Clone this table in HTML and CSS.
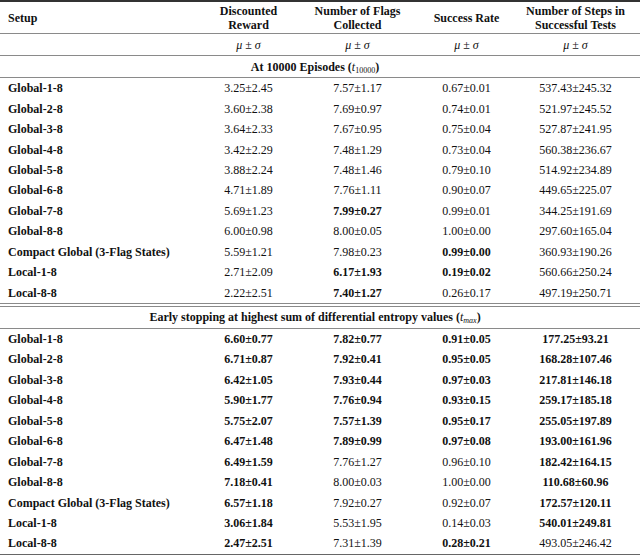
FILE: index.html
```html
<!DOCTYPE html>
<html>
<head>
<meta charset="utf-8">
<link rel="stylesheet" href="styles.css">
</head>
<body>
<table class="results">
  <colgroup>
    <col class="c-setup"><col class="c-val"><col class="c-val"><col class="c-val"><col class="c-last">
  </colgroup>
  <thead>
    <tr class="head">
      <th class="setup">Setup</th>
      <th>Discounted<br>Reward</th>
      <th>Number of Flags<br>Collected</th>
      <th>Success Rate</th>
      <th class="last">Number of Steps in<br>Successful Tests</th>
    </tr>
    <tr class="units">
      <td></td>
      <td><i>μ</i><span class="pm">±</span><i>σ</i></td>
      <td><i>μ</i><span class="pm">±</span><i>σ</i></td>
      <td><i>μ</i><span class="pm">±</span><i>σ</i></td>
      <td class="last"><i>μ</i><span class="pm">±</span><i>σ</i></td>
    </tr>
  </thead>
  <tbody>
    <tr class="section"><td colspan="5">At 10000 Episodes (<i>t</i><sub>10000</sub>)</td></tr>
    <tr><th class="setup">Global-1-8</th><td>3.25±2.45</td><td>7.57±1.17</td><td>0.67±0.01</td><td class="last">537.43±245.32</td></tr>
    <tr><th class="setup">Global-2-8</th><td>3.60±2.38</td><td>7.69±0.97</td><td>0.74±0.01</td><td class="last">521.97±245.52</td></tr>
    <tr><th class="setup">Global-3-8</th><td>3.64±2.33</td><td>7.67±0.95</td><td>0.75±0.04</td><td class="last">527.87±241.95</td></tr>
    <tr><th class="setup">Global-4-8</th><td>3.42±2.29</td><td>7.48±1.29</td><td>0.73±0.04</td><td class="last">560.38±236.67</td></tr>
    <tr><th class="setup">Global-5-8</th><td>3.88±2.24</td><td>7.48±1.46</td><td>0.79±0.10</td><td class="last">514.92±234.89</td></tr>
    <tr><th class="setup">Global-6-8</th><td>4.71±1.89</td><td>7.76±1.11</td><td>0.90±0.07</td><td class="last">449.65±225.07</td></tr>
    <tr><th class="setup">Global-7-8</th><td>5.69±1.23</td><td class="b">7.99±0.27</td><td>0.99±0.01</td><td class="last">344.25±191.69</td></tr>
    <tr><th class="setup">Global-8-8</th><td>6.00±0.98</td><td>8.00±0.05</td><td>1.00±0.00</td><td class="last">297.60±165.04</td></tr>
    <tr><th class="setup">Compact Global (3-Flag States)</th><td>5.59±1.21</td><td>7.98±0.23</td><td class="b">0.99±0.00</td><td class="last">360.93±190.26</td></tr>
    <tr><th class="setup">Local-1-8</th><td>2.71±2.09</td><td class="b">6.17±1.93</td><td class="b">0.19±0.02</td><td class="last">560.66±250.24</td></tr>
    <tr class="end"><th class="setup">Local-8-8</th><td>2.22±2.51</td><td class="b">7.40±1.27</td><td>0.26±0.17</td><td class="last">497.19±250.71</td></tr>
  </tbody>
  <tbody>
    <tr class="section"><td colspan="5">Early stopping at highest sum of differential entropy values (<i>t</i><sub class="it">max</sub>)</td></tr>
    <tr><th class="setup">Global-1-8</th><td class="b">6.60±0.77</td><td class="b">7.82±0.77</td><td class="b">0.91±0.05</td><td class="last b">177.25±93.21</td></tr>
    <tr><th class="setup">Global-2-8</th><td class="b">6.71±0.87</td><td class="b">7.92±0.41</td><td class="b">0.95±0.05</td><td class="last b">168.28±107.46</td></tr>
    <tr><th class="setup">Global-3-8</th><td class="b">6.42±1.05</td><td class="b">7.93±0.44</td><td class="b">0.97±0.03</td><td class="last b">217.81±146.18</td></tr>
    <tr><th class="setup">Global-4-8</th><td class="b">5.90±1.77</td><td class="b">7.76±0.94</td><td class="b">0.93±0.15</td><td class="last b">259.17±185.18</td></tr>
    <tr><th class="setup">Global-5-8</th><td class="b">5.75±2.07</td><td class="b">7.57±1.39</td><td class="b">0.95±0.17</td><td class="last b">255.05±197.89</td></tr>
    <tr><th class="setup">Global-6-8</th><td class="b">6.47±1.48</td><td class="b">7.89±0.99</td><td class="b">0.97±0.08</td><td class="last b">193.00±161.96</td></tr>
    <tr><th class="setup">Global-7-8</th><td class="b">6.49±1.59</td><td>7.76±1.27</td><td>0.96±0.10</td><td class="last b">182.42±164.15</td></tr>
    <tr><th class="setup">Global-8-8</th><td class="b">7.18±0.41</td><td>8.00±0.03</td><td>1.00±0.00</td><td class="last b">110.68±60.96</td></tr>
    <tr><th class="setup">Compact Global (3-Flag States)</th><td class="b">6.57±1.18</td><td>7.92±0.27</td><td>0.92±0.07</td><td class="last b">172.57±120.11</td></tr>
    <tr><th class="setup">Local-1-8</th><td class="b">3.06±1.84</td><td>5.53±1.95</td><td>0.14±0.03</td><td class="last b">540.01±249.81</td></tr>
    <tr class="final"><th class="setup">Local-8-8</th><td class="b">2.47±2.51</td><td>7.31±1.39</td><td class="b">0.28±0.21</td><td class="last">493.05±246.42</td></tr>
  </tbody>
</table>
</body>
</html>
```

FILE: styles.css
```css
html, body {
  margin: 0;
  padding: 0;
  background: #ffffff;
}

.results {
  width: 640px;
  border-collapse: collapse;
  table-layout: fixed;
  font-family: "Liberation Serif", "Times New Roman", serif;
  font-size: 12px;
  color: #111111;
  border-top: 2px solid #333333;
  border-bottom: 2px solid #666666;
}

.c-setup { width: 194px; }
.c-val { width: 109px; }
.c-last { width: 119px; }

.results th,
.results td {
  padding: 0;
  text-align: center;
  vertical-align: middle;
  line-height: 14px;
  white-space: nowrap;
}

.results th.setup {
  text-align: left;
  padding-left: 8px;
  font-weight: bold;
}

.results .last {
  padding-right: 10px;
}

.head th {
  height: 31px;
  font-weight: bold;
  border-bottom: 1px solid #8a8a8a;
}

.units td {
  height: 21px;
  border-bottom: 1px solid #8a8a8a;
}

.pm {
  margin: 0 3px;
  font-style: normal;
}

.section td {
  font-weight: bold;
  border-bottom: 1px solid #8a8a8a;
  padding-right: 10px;
}

.section sub {
  font-size: 8px;
  font-weight: normal;
  line-height: 0;
  vertical-align: -2px;
}

.section i {
  font-weight: normal;
}

.section sub.it {
  font-style: italic;
}

tbody tr td,
tbody tr th {
  height: 20.45px;
}

tbody tr.section td {
  height: 21px;
}

.b {
  font-weight: bold;
}

tr.end th,
tr.end td {
  border-bottom: 4px double #8a8a8a;
}
```
